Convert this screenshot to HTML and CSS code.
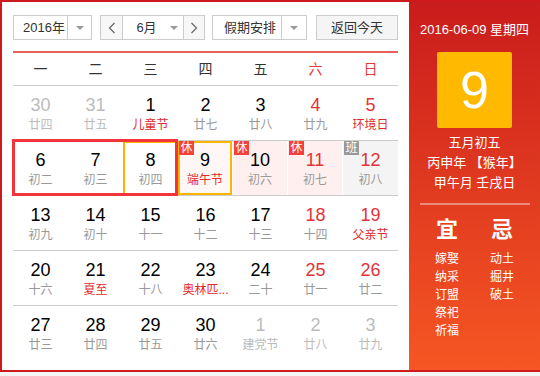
FILE: index.html
```html
<!DOCTYPE html>
<html lang="zh-CN">
<head>
<meta charset="utf-8">
<title>万年历</title>
<link rel="stylesheet" href="styles.css">
</head>
<body>
<div class="widget">
  <div class="main">
    <div class="toolbar">
      <div class="select year">
        <span class="sel-text">2016年</span>
        <span class="sel-arrow"><i class="tri"></i></span>
      </div>
      <div class="month-group">
        <span class="nav"><svg width="8" height="12" viewBox="0 0 8 12"><polyline points="6.5,1 1.5,6 6.5,11" fill="none" stroke="#666" stroke-width="1.2"/></svg></span>
        <span class="month"><span class="month-text">6月</span><i class="tri"></i></span>
        <span class="nav nav-next"><svg width="8" height="12" viewBox="0 0 8 12"><polyline points="1.5,1 6.5,6 1.5,11" fill="none" stroke="#666" stroke-width="1.2"/></svg></span>
      </div>
      <div class="select holiday">
        <span class="sel-text">假期安排</span>
        <span class="sel-arrow"><i class="tri"></i></span>
      </div>
      <div class="today-btn">返回今天</div>
    </div>
    <div class="rule"></div>
    <div class="week-head">
      <span>一</span><span>二</span><span>三</span><span>四</span><span>五</span><span class="red">六</span><span class="red">日</span>
    </div>
    <div class="row">
      <div class="cell other"><b>30</b><em>廿四</em></div>
      <div class="cell other"><b>31</b><em>廿五</em></div>
      <div class="cell fest"><b>1</b><em>儿童节</em></div>
      <div class="cell"><b>2</b><em>廿七</em></div>
      <div class="cell"><b>3</b><em>廿八</em></div>
      <div class="cell wkd"><b>4</b><em>廿九</em></div>
      <div class="cell wkd fest"><b>5</b><em>环境日</em></div>
    </div>
    <div class="row">
      <div class="cell"><b>6</b><em>初二</em></div>
      <div class="cell"><b>7</b><em>初三</em></div>
      <div class="cell sel"><b>8</b><em>初四</em></div>
      <div class="cell hol today fest"><span class="badge">休</span><b>9</b><em>端午节</em></div>
      <div class="cell hol"><span class="badge">休</span><b>10</b><em>初六</em></div>
      <div class="cell hol wkd"><span class="badge">休</span><b>11</b><em>初七</em></div>
      <div class="cell work wkd"><span class="badge badge-work">班</span><b>12</b><em>初八</em></div>
      <div class="range"></div>
    </div>
    <div class="row">
      <div class="cell"><b>13</b><em>初九</em></div>
      <div class="cell"><b>14</b><em>初十</em></div>
      <div class="cell"><b>15</b><em>十一</em></div>
      <div class="cell"><b>16</b><em>十二</em></div>
      <div class="cell"><b>17</b><em>十三</em></div>
      <div class="cell wkd"><b>18</b><em>十四</em></div>
      <div class="cell wkd fest"><b>19</b><em>父亲节</em></div>
    </div>
    <div class="row">
      <div class="cell"><b>20</b><em>十六</em></div>
      <div class="cell fest"><b>21</b><em>夏至</em></div>
      <div class="cell"><b>22</b><em>十八</em></div>
      <div class="cell fest"><b>23</b><em>奥林匹...</em></div>
      <div class="cell"><b>24</b><em>二十</em></div>
      <div class="cell wkd"><b>25</b><em>廿一</em></div>
      <div class="cell wkd"><b>26</b><em>廿二</em></div>
    </div>
    <div class="row last">
      <div class="cell"><b>27</b><em>廿三</em></div>
      <div class="cell"><b>28</b><em>廿四</em></div>
      <div class="cell"><b>29</b><em>廿五</em></div>
      <div class="cell"><b>30</b><em>廿六</em></div>
      <div class="cell other"><b>1</b><em>建党节</em></div>
      <div class="cell other"><b>2</b><em>廿八</em></div>
      <div class="cell other"><b>3</b><em>廿九</em></div>
    </div>
  </div>
  <div class="panel">
    <div class="p-date">2016-06-09 星期四</div>
    <div class="p-day">9</div>
    <div class="p-lunar">
      <div>五月初五</div>
      <div>丙申年 【猴年】</div>
      <div>甲午月 壬戌日</div>
    </div>
    <div class="p-rule"></div>
    <div class="p-yj">
      <div class="p-col">
        <div class="p-title">宜</div>
        <div class="p-item">嫁娶</div>
        <div class="p-item">纳采</div>
        <div class="p-item">订盟</div>
        <div class="p-item">祭祀</div>
        <div class="p-item">祈福</div>
      </div>
      <div class="p-col">
        <div class="p-title">忌</div>
        <div class="p-item">动土</div>
        <div class="p-item">掘井</div>
        <div class="p-item">破土</div>
      </div>
    </div>
  </div>
</div>
</body>
</html>
```

FILE: styles.css
```css
html { background: #f4f4f4; }
body {
  margin: 0;
  font-family: "Liberation Sans", "Noto Sans CJK SC", sans-serif;
  color: #333;
}
.widget {
  width: 540px;
  height: 372px;
  box-sizing: border-box;
  border: 2px solid #cc1a1d;
  border-right: 0;
  background: #fff;
  display: flex;
}
.main {
  width: 407px;
  flex: none;
  box-sizing: border-box;
  padding: 13px 11px 0;
}
.toolbar {
  display: flex;
  height: 25px;
  font-size: 13px;
}
.select {
  display: flex;
  box-sizing: border-box;
  height: 25px;
  border: 1px solid #ccc;
  background: #fff;
}
.sel-text {
  line-height: 23px;
  box-sizing: border-box;
  border-right: 1px solid #ccc;
}
.sel-arrow {
  flex: 1;
  display: flex;
  align-items: center;
  justify-content: center;
}
.tri {
  display: block;
  width: 0;
  height: 0;
  border-left: 4px solid transparent;
  border-right: 4px solid transparent;
  border-top: 4px solid #999;
}
.year { width: 79px; }
.year .sel-text { width: 54px; padding-left: 9px; }
.month-group {
  display: flex;
  box-sizing: border-box;
  width: 105px;
  height: 25px;
  margin-left: 8px;
  border: 1px solid #ccc;
}
.nav {
  width: 21px;
  background: #f7f7f7;
  display: flex;
  align-items: center;
  justify-content: center;
  border-right: 1px solid #ccc;
}
.nav-next { width: 20px; border-right: 0; }
.month {
  width: 60px;
  display: flex;
  align-items: center;
  border-right: 1px solid #ccc;
  background: #fff;
}
.month-text { width: 47px; text-align: center; line-height: 23px; }
.holiday { width: 95px; margin-left: 7px; }
.holiday .sel-text { width: 69px; padding-left: 11px; }
.today-btn {
  width: 82px;
  height: 25px;
  box-sizing: border-box;
  margin-left: 9px;
  border: 1px solid #ccc;
  background: #f5f5f5;
  text-align: center;
  line-height: 23px;
}
.rule {
  margin-top: 11px;
  height: 2px;
  background: #e8605c;
}
.week-head {
  display: grid;
  grid-template-columns: repeat(7, 55px);
  height: 32px;
  line-height: 32px;
  border-bottom: 1px solid #ccc;
  font-size: 14px;
  text-align: center;
  color: #333;
}
.week-head .red { color: #e23a3a; }
.row {
  position: relative;
  display: grid;
  grid-template-columns: repeat(7, 55px);
  height: 54px;
  border-bottom: 1px solid #ccc;
}
.row.last { border-bottom: 0; }
.cell {
  position: relative;
  box-sizing: border-box;
  padding-top: 8px;
  text-align: center;
}
.cell b {
  display: block;
  font-weight: normal;
  font-size: 18px;
  line-height: 22px;
  color: #000;
}
.cell em {
  display: block;
  font-style: normal;
  font-size: 12px;
  line-height: 18px;
  color: #999;
}
.cell.other b, .cell.other em { color: #bbb; }
.cell.wkd b { color: #e5323a; }
.cell.fest em { color: #e02a2a; }
.cell.hol { background: #fff0ef; border-right: 1px solid #fff; }
.cell.work { background: #f4f4f4; }
.cell.today { background: #fff7f6; box-shadow: inset 0 0 0 2px #ffb400; }
.cell.sel { box-shadow: inset 0 0 0 2px #ffb400; }
.badge {
  position: absolute;
  left: 1px;
  top: 0;
  width: 15px;
  height: 14px;
  line-height: 14px;
  font-size: 12px;
  color: #fff;
  background: #f5403c;
  text-align: center;
}
.badge-work { background: #999; }
.range {
  position: absolute;
  left: -1px;
  top: -2px;
  width: 166px;
  height: 57px;
  box-sizing: border-box;
  border: 3px solid #f2353a;
  pointer-events: none;
}
.panel {
  width: 131px;
  flex: none;
  background: linear-gradient(#c91c1c, #e03a20 50%, #f65623);
  color: #fff;
  text-align: center;
}
.p-date {
  margin-top: 18px;
  font-size: 13px;
  line-height: 20px;
}
.p-day {
  width: 75px;
  height: 76px;
  margin: 12px auto 0;
  border-radius: 2px;
  background: #ffb900;
  font-size: 52px;
  line-height: 76px;
}
.p-lunar {
  margin-top: 5px;
  font-size: 13px;
  line-height: 20px;
}
.p-rule {
  width: 110px;
  height: 2px;
  margin: 10px auto 0;
  background: rgba(255, 255, 255, 0.4);
}
.p-yj {
  display: flex;
  justify-content: center;
  margin-top: 10px;
}
.p-col { width: 55px; }
.p-title {
  font-size: 22px;
  font-weight: bold;
  line-height: 30px;
  margin-bottom: 5px;
}
.p-item {
  font-size: 12px;
  line-height: 18px;
}
```
